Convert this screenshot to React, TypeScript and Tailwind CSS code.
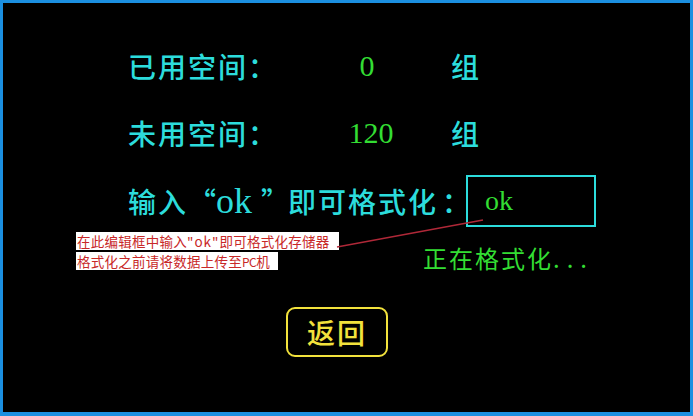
import React from "react";

export default function App() {
  return (
    <div className="relative w-[693px] h-[416px] bg-black border-[3px] border-b-4 border-[#1b8fe0] overflow-hidden font-['Noto_Sans_CJK_SC','Noto_Sans',sans-serif]">
      <div className="flex flex-col pl-[125px] pt-[43px]">
        {/* Row 1 */}
        <div className="flex items-center h-[40px]">
          <div className="w-[218px] text-[28px] font-medium tracking-[2px] text-[#2cdcdc] leading-none">已用空间：</div>
          <div className="w-[50px] pr-[8px] text-center text-[30px] text-[#33dd33] leading-none font-['Liberation_Serif',serif]">0</div>
          <div className="ml-[55px] text-[28px] font-medium text-[#2cdcdc] leading-none">组</div>
        </div>
        {/* Row 2 */}
        <div className="flex items-center h-[40px] mt-[27px]">
          <div className="w-[218px] text-[28px] font-medium tracking-[2px] text-[#2cdcdc] leading-none">未用空间：</div>
          <div className="w-[50px] text-center text-[30px] text-[#33dd33] leading-none font-['Liberation_Serif',serif]">120</div>
          <div className="ml-[55px] text-[28px] font-medium text-[#2cdcdc] leading-none">组</div>
        </div>
        {/* Row 3 */}
        <div className="flex items-center h-[52px] mt-[22px]">
          <div className="flex items-baseline text-[28px] font-medium tracking-[2px] text-[#2cdcdc] leading-none">
            <span>输入</span>
            <span className="w-[26px] text-left tracking-normal whitespace-nowrap">“</span>
            <span className="w-[47px] pl-[2px] text-[36px] tracking-normal font-['Liberation_Serif',serif]">ok</span>
            <span className="w-[27px] text-left tracking-normal whitespace-nowrap">”</span>
            <span>即可格式化</span>
            <span className="ml-[4px] w-[20px] whitespace-nowrap">：</span>
          </div>
          <div className="ml-[4px] w-[130px] h-[52px] border-2 border-[#2cdcdc] flex items-center pl-[17px]">
            <span className="text-[28px] text-[#33dd33] leading-none font-['Liberation_Serif',serif]">ok</span>
          </div>
        </div>
        {/* Row 4 */}
        <div className="ml-[295px] mt-[16px] h-[30px] flex items-center text-[24px] tracking-[2px] text-[#33dd33] leading-none">
          正在格式化<span className="tracking-[7px]">...</span>
        </div>
        {/* Button */}
        <div className="ml-[158px] mt-[34px] w-[102px] h-[50px] border-2 border-[#f2e23c] rounded-[9px] flex items-center justify-center">
          <span className="text-[28px] font-medium tracking-[2px] text-[#f2e23c] leading-none">返回</span>
        </div>
      </div>

      {/* Annotation */}
      <div className="absolute left-[73px] top-[229px] flex flex-col items-start gap-[2px] text-[#c82828] text-[13.5px] leading-[18px] tracking-[0.25px] whitespace-nowrap">
        <div className="h-[18px] bg-white pl-[1px] pr-[10px]">
          在此编辑框中输入<span className="tracking-[1px]">"ok"</span>即可格式化存储器
        </div>
        <div className="h-[18px] bg-white pl-[1px] pr-[8px]">
          格式化之前请将数据上传至<span className="text-[12px] tracking-[-0.5px]">PC</span>机
        </div>
      </div>
      <svg className="absolute left-0 top-0 w-full h-full pointer-events-none" viewBox="0 0 687 409">
        <line x1="334" y1="244" x2="480" y2="217" stroke="#b02838" strokeWidth="1.3" />
      </svg>
    </div>
  );
}
